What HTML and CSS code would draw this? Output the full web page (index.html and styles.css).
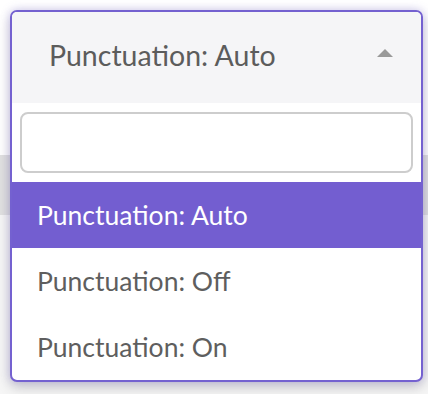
FILE: index.html
```html
<!DOCTYPE html>
<html lang="en">
  <head>
    <meta charset="UTF-8" />
    <meta name="viewport" content="width=device-width, initial-scale=1.0" />
    <title>Punctuation select</title>
    <link rel="stylesheet" href="styles.css">
  </head>

  <body>
    <div class="page">
      <div class="page-top"></div>
      <div class="page-bar"></div>
      <div class="page-rest"></div>
    </div>

    <div class="select open">
      <div class="select-head">
        <span class="select-value">Punctuation: Auto</span>
        <span class="select-arrow"></span>
      </div>
      <div class="select-search">
        <input type="text" class="search-input" />
      </div>
      <ul class="select-options">
        <li class="option selected">Punctuation: Auto</li>
        <li class="option">Punctuation: Off</li>
        <li class="option">Punctuation: On</li>
      </ul>
    </div>
  </body>
</html>
```

FILE: styles.css
```css
* {
  box-sizing: border-box;
  margin: 0;
  padding: 0;
}

body {
  position: relative;
  width: 428px;
  height: 394px;
  overflow: hidden;
  background: #fff;
  font-family: Lato, "Open Sans", sans-serif;
}

.page-top {
  height: 155px;
  background: #fff;
}

.page-bar {
  height: 60px;
  background: #e1e1e1;
}

.page-rest {
  height: 179px;
  background: #f6f6f6;
}

/* dropdown sits over the page */
.select {
  position: absolute;
  top: 10px;
  left: 10px;
  width: 413px;
  background: #fff;
  border: 2px solid #7461d0;
  border-radius: 7px;
  overflow: hidden;
  box-shadow: 0 0 10px rgba(116, 97, 208, 0.35),
    0 6px 14px rgba(0, 0, 0, 0.16);
}

.select-head {
  display: flex;
  align-items: center;
  justify-content: space-between;
  height: 91px;
  padding: 0 28px 5px 37px;
  background: #f5f5f7;
}

.select-value {
  font-size: 28.5px;
  line-height: 36px;
  color: #5c5c5c;
}

.select-arrow {
  width: 0;
  height: 0;
  border-left: 8px solid transparent;
  border-right: 8px solid transparent;
  border-bottom: 8px solid #999;
  margin-top: -4px;
}

.select-search {
  padding: 9px 8px;
}

.search-input {
  display: block;
  width: 100%;
  height: 61px;
  border: 2px solid #cdcdcd;
  border-radius: 8px;
  background: #fff;
  outline: none;
}

.select-options {
  list-style: none;
}

.option {
  height: 66px;
  padding-left: 25px;
  font-size: 26.5px;
  line-height: 66px;
  color: #5e5e5e;
}

.option.selected {
  background: #735ed0;
  color: #fff;
}
```
